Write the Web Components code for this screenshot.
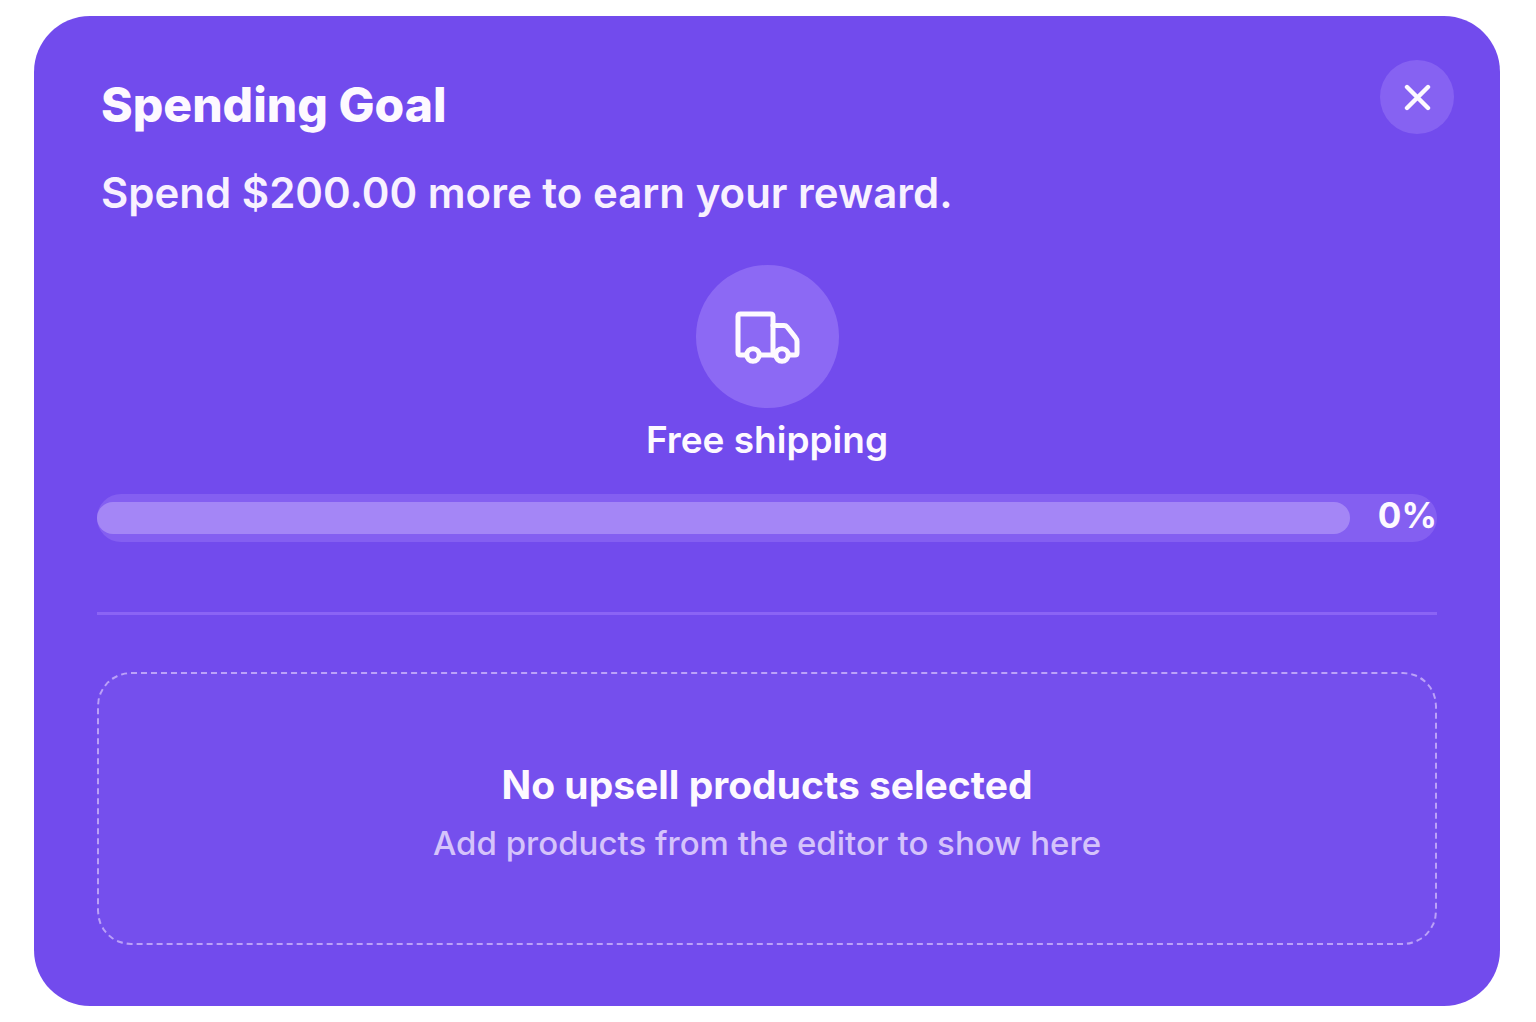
<!DOCTYPE html>
<html lang="en">
<head>
<meta charset="utf-8">
<meta name="viewport" content="width=device-width, initial-scale=1">
<title>Spending Goal</title>
<style>
  body {
    margin: 0;
    padding: 16px 36px 16px 34px;
    background: #ffffff;
    color: #fdf9ff;
    font-family: Inter, "Liberation Sans", sans-serif;
  }
</style>
</head>
<body>
  <goal-card heading="Spending Goal" message="Spend $200.00 more to earn your reward.">
    <goal-reward label="Free shipping"></goal-reward>
    <goal-progress percent="0"></goal-progress>
    <upsell-empty>
      <span slot="title">No upsell products selected</span>
      <span slot="hint">Add products from the editor to show here</span>
    </upsell-empty>
  </goal-card>

<script>
(function () {
  class GoalCard extends HTMLElement {
    constructor() {
      super();
      this.attachShadow({ mode: "open" });
    }

    connectedCallback() {
      this.shadowRoot.innerHTML = `
        <style>
          :host {
            display: block;
            padding-bottom: 61px;
            border-radius: 56px;
            background: #724bed;
          }
          header {
            display: flex;
            align-items: flex-start;
            justify-content: space-between;
            gap: 24px;
            padding: 44px 46px 0 67px;
          }
          .text {
            padding-top: 15px;
          }
          h2 {
            margin: 0;
            font-size: 48px;
            line-height: 60px;
            font-weight: 800;
          }
          p {
            margin: 32px 0 0;
            font-size: 42px;
            line-height: 52px;
            font-weight: 600;
            color: #f8f1ff;
          }
          button {
            display: flex;
            align-items: center;
            justify-content: center;
            flex: none;
            width: 74px;
            height: 74px;
            padding: 0;
            border: 0;
            border-radius: 50%;
            background: #8662f2;
            color: inherit;
            cursor: pointer;
          }
          .content {
            padding: 46px 63px 0;
          }
        </style>
        <header>
          <div class="text">
            <h2>${this.getAttribute("heading")}</h2>
            <p>${this.getAttribute("message")}</p>
          </div>
          <button type="button" aria-label="Close">
            <svg width="28" height="28" viewBox="0 0 28 28" fill="none" stroke="currentColor" stroke-width="4.4" stroke-linecap="round" aria-hidden="true">
              <path d="M4 4l21 21M25 4L4 25"/>
            </svg>
          </button>
        </header>
        <div class="content"><slot></slot></div>
      `;
      this.shadowRoot.querySelector("button").addEventListener("click", () => {
        this.dispatchEvent(new CustomEvent("goal:close", { bubbles: true }));
      });
    }
  }

  class GoalReward extends HTMLElement {
    constructor() {
      super();
      this.attachShadow({ mode: "open" });
    }

    connectedCallback() {
      this.shadowRoot.innerHTML = `
        <style>
          :host {
            display: flex;
            flex-direction: column;
            align-items: center;
            gap: 8px;
          }
          .icon {
            display: flex;
            align-items: center;
            justify-content: center;
            width: 143px;
            height: 143px;
            border-radius: 50%;
            background: #8c69f4;
          }
          .label {
            font-size: 37px;
            line-height: 48px;
            font-weight: 600;
          }
        </style>
        <div class="icon">
          <svg width="66" height="54" viewBox="0 0 66 54" fill="none" stroke="currentColor" stroke-width="5" stroke-linecap="round" stroke-linejoin="round" aria-hidden="true">
            <path d="M12 45H6.5Q4 45 4 42.500V6.500Q4 4 6.500 4H36.500Q39 4 39 6.500V45"/>
            <path d="M39 15.500H50Q52 15.500 53.200 17L61.500 27.500Q63 29.300 63 31.500V43Q63 45 61 45H54.500"/>
            <path d="M25.500 45H41"/>
            <circle cx="19" cy="45" r="6.200"/>
            <circle cx="48" cy="45" r="6.200"/>
          </svg>
        </div>
        <div class="label">${this.getAttribute("label")}</div>
      `;
    }
  }

  class GoalProgress extends HTMLElement {
    constructor() {
      super();
      this.attachShadow({ mode: "open" });
    }

    connectedCallback() {
      const percent = this.getAttribute("percent");
      this.shadowRoot.innerHTML = `
        <style>
          :host {
            display: block;
            margin-top: 30px;
            padding-bottom: 70px;
            border-bottom: 3px solid #8b64f5;
          }
          .track {
            display: flex;
            align-items: center;
            gap: 28px;
            height: 48px;
            border-radius: 24px;
            background: #845ff1;
          }
          .bar {
            flex: 1;
            height: 32px;
            border-radius: 16px;
            background: #a486f6;
          }
          .value {
            padding: 0 0 6px;
            font-size: 35px;
            line-height: 44px;
            font-weight: 700;
          }
        </style>
        <div class="track" role="progressbar" aria-label="Spending progress" aria-valuemin="0" aria-valuemax="100" aria-valuenow="${percent}">
          <div class="bar"></div>
          <span class="value">${percent}%</span>
        </div>
      `;
    }
  }

  class UpsellEmpty extends HTMLElement {
    constructor() {
      super();
      this.attachShadow({ mode: "open" });
      this.shadowRoot.innerHTML = `
        <style>
          :host {
            display: flex;
            flex-direction: column;
            align-items: center;
            gap: 8px;
            margin-top: 57px;
            padding: 83px 24px 78px;
            border: 2px dashed #bba1f8;
            border-radius: 34px;
            background: #754fed;
            text-align: center;
          }
          .title {
            font-size: 39px;
            line-height: 56px;
            font-weight: 700;
          }
          .hint {
            font-size: 33px;
            line-height: 44px;
            font-weight: 500;
            color: #d5c3fb;
          }
        </style>
        <div class="title"><slot name="title"></slot></div>
        <div class="hint"><slot name="hint"></slot></div>
      `;
    }
  }

  customElements.define("goal-card", GoalCard);
  customElements.define("goal-reward", GoalReward);
  customElements.define("goal-progress", GoalProgress);
  customElements.define("upsell-empty", UpsellEmpty);
})();
</script>
</body>
</html>
